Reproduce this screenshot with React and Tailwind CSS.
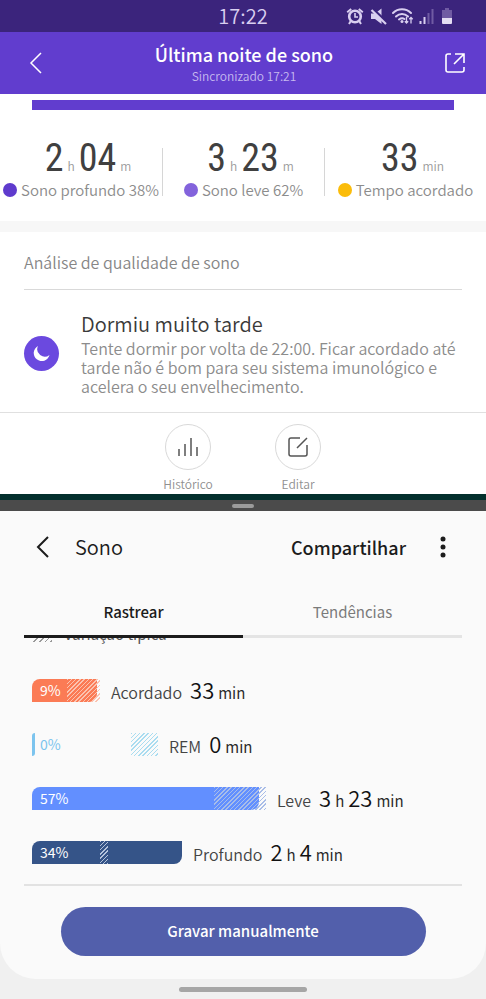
const STATS = [
  { parts: [['2', 'h'], ['04', 'm']], label: 'Sono profundo 38%', dot: 'bg-[#5f3bcd]' },
  { parts: [['3', 'h'], ['23', 'm']], label: 'Sono leve 62%', dot: 'bg-[#8363dc]' },
  { parts: [['33', 'min']], label: 'Tempo acordado', dot: 'bg-[#fbbc0a]' },
];

// fill, from and to are percentages of the row's width
const STAGES = [
  {
    name: 'Acordado',
    pct: 9,
    time: [['33', 'min']],
    fill: 15.1,
    from: 8.1,
    to: 15.8,
    bar: 'bg-[#fb7b55] rounded-tl-lg rounded-br-lg',
    text: 'text-white',
    hatch: 'bg-[repeating-linear-gradient(135deg,#fbc3b0_0px,#fbc3b0_1px,transparent_1px,transparent_3px)]',
  },
  {
    name: 'REM',
    pct: 0,
    time: [['0', 'min']],
    fill: 0.7,
    from: 23,
    to: 29.3,
    bar: 'bg-[#7cc4ee] rounded-tl-sm rounded-br-sm',
    text: 'text-[#7cc4ee]',
    hatch: 'bg-[repeating-linear-gradient(135deg,#a9dcf0_0px,#a9dcf0_1px,transparent_1px,transparent_3px)]',
  },
  {
    name: 'Leve',
    pct: 57,
    time: [['3', 'h'], ['23', 'min']],
    fill: 52.8,
    from: 42.3,
    to: 54.4,
    bar: 'bg-[#628fff] rounded-tl-lg rounded-br-lg',
    text: 'text-white',
    hatch: 'bg-[repeating-linear-gradient(135deg,#a9bde8_0px,#a9bde8_1px,transparent_1px,transparent_3px)]',
  },
  {
    name: 'Profundo',
    pct: 34,
    time: [['2', 'h'], ['4', 'min']],
    fill: 34.9,
    from: 15.8,
    to: 17.7,
    bar: 'bg-[#355488] rounded-tl-lg rounded-br-lg',
    text: 'text-white',
    hatch: 'bg-[repeating-linear-gradient(135deg,#b4c3dc_0px,#b4c3dc_1px,transparent_1px,transparent_3px)]',
  },
];

function StatusIcons() {
  return (
    <svg width="108" height="20" viewBox="0 0 108 20" fill="none" aria-hidden="true">
      <g stroke="#d9cff0" strokeWidth="2.6">
        <circle cx="9" cy="10.5" r="5.8" />
        <path d="M9 7V11H12" strokeWidth="1.6" />
        <path d="M1.2 6.2L5.2 3M16.8 6.200L12.8 3M4.8 15L3 18M13.2 15L15 18" strokeWidth="2" />
      </g>
      <path d="M25 7.500H29L35.500 2.500V18L29 13H25Z" fill="#d9cff0" />
      <path d="M26.500 2.500L41 16.500" stroke="#3b247c" strokeWidth="2.500" />
      <path d="M25.500 4L40 18" stroke="#d9cff0" strokeWidth="2.200" />
      <g stroke="#d9cff0" strokeWidth="2" strokeLinecap="round">
        <path d="M47 7C52 2 60 2 65 7" />
        <path d="M50 10.500C53.500 7 58.500 7 62 10.500" />
        <path d="M53 13.500C55 12 57 12 58.500 13" />
      </g>
      <circle cx="56" cy="15.500" r="1.500" fill="#d9cff0" />
      <path
        d="M60.500 11V17M58.800 15.300L60.500 17L62.200 15.300M65 17.500V11.500M63.300 13.200L65 11.500L66.700 13.200"
        stroke="#d9cff0"
        strokeWidth="1.300"
      />
      <path d="M74.500 18V15M78.500 18V11" stroke="#d9cff0" strokeWidth="2" />
      <path d="M82.500 18V7M86.500 18V3" stroke="#705ba3" strokeWidth="2" />
      <path d="M96 4H99V2H103V4H106V12H96Z" fill="#705ba3" />
      <path d="M96 12H106V17Q106 18 105 18H97Q96 18 96 17Z" fill="#e4ddf3" />
    </svg>
  );
}

function StatusBar() {
  return (
    <div className="grid h-8 grid-cols-3 items-center bg-[#3b247c] px-8 text-[#d9cff0]">
      <span />
      <span className="text-center text-xl font-[350]">17:22</span>
      <span className="flex justify-end">
        <StatusIcons />
      </span>
    </div>
  );
}

function LastNightHeader() {
  return (
    <header className="flex h-[62px] items-center bg-[#613dce] pr-[21px] pl-[29px] text-white">
      <button type="button" aria-label="Voltar">
        <svg width="14" height="22" viewBox="0 0 14 22" fill="none" stroke="currentColor" strokeWidth="1.500">
          <path d="M12 1L2 11L12 21" />
        </svg>
      </button>
      <div className="flex-1 pt-0.5 text-center">
        <h1 className="text-lg leading-6 font-medium">Última noite de sono</h1>
        <p className="text-xs leading-5 font-[350] text-[#c6b9ef]">Sincronizado 17:21</p>
      </div>
      <button type="button" aria-label="Abrir">
        <svg width="20" height="20" viewBox="0 0 20 20" fill="none" stroke="currentColor" strokeWidth="1.600">
          <path d="M6 1H3Q1 1 1 3V17Q1 19 3 19H17Q19 19 19 17V14" />
          <path d="M10 1H19V10M19 1L9 11" />
        </svg>
      </button>
    </header>
  );
}

function Stat({ stat }) {
  return (
    <div className="flex flex-1 flex-col items-center">
      <div className="flex h-10 items-baseline gap-1 pl-3.5 text-xs font-[350] text-[#999]">
        {stat.parts.map(([value, unit]) => (
          <span key={unit} className="flex items-baseline gap-1">
            <span className="font-['Roboto_Condensed','Roboto',sans-serif] text-[38px] leading-10 font-normal text-[#404040]">
              {value}
            </span>
            {unit}
          </span>
        ))}
      </div>
      <div className="flex items-center gap-1 text-[15px] leading-6 font-[350] whitespace-nowrap text-[#8c8c8c]">
        <span className={`size-3.5 rounded-full ${stat.dot}`} />
        {stat.label}
      </div>
    </div>
  );
}

function RoundAction({ label, children }) {
  return (
    <button type="button" className="flex w-[110px] flex-col items-center text-[#555]">
      <span className="flex size-[46px] items-center justify-center rounded-full border border-[#d9d9d9]">
        {children}
      </span>
      <span className="mt-1 text-xs leading-5 font-[350] text-[#909090]">{label}</span>
    </button>
  );
}

function LastNight() {
  return (
    <section className="bg-white">
      <StatusBar />
      <LastNightHeader />
      <div className="mx-8 mt-1.5 h-2.5 bg-[#613dce]" />
      <div className="grid grid-cols-3 pt-7 pb-[19px]">
        {STATS.map((stat, i) => (
          <div key={stat.label} className="flex">
            {i > 0 && <span className="mb-1.5 h-12 w-px self-end bg-[#d6d6d6]" />}
            <Stat stat={stat} />
          </div>
        ))}
      </div>
      <div className="h-[11px] bg-[#f7f7f7]" />
      <div className="mx-6">
        <h2 className="border-b border-[#d9d9d9] pt-[18px] pb-[15px] text-base leading-6 font-[350] text-[#868686]">
          Análise de qualidade de sono
        </h2>
        <div className="flex items-center gap-[22px] pt-5 pb-4">
          <span className="flex size-[35px] shrink-0 items-center justify-center rounded-full bg-[#6b49df]">
            <svg width="17" height="17" viewBox="0 0 17 17" fill="#fff" aria-hidden="true">
              <path d="M5 1A8 8 0 1 0 16.500 10A7.500 7.500 0 0 1 5 1Z" />
            </svg>
          </span>
          <div>
            <h3 className="mb-px text-xl leading-7 font-[350] text-[#3a3a3a]">Dormiu muito tarde</h3>
            <p className="text-base leading-[19px] font-[350] text-[#8c8c8c]">
              Tente dormir por volta de 22:00. Ficar acordado até tarde não é bom para seu sistema imunológico e
              acelera o seu envelhecimento.
            </p>
          </div>
        </div>
      </div>
      <div className="flex justify-center border-t border-[#e0e0e0] pt-[11px]">
        <RoundAction label="Histórico">
          <svg width="20" height="20" viewBox="0 0 20 20" stroke="currentColor" strokeWidth="1.500">
            <path d="M1 19V12M7 19V7M13 19V1M19 19V10" />
          </svg>
        </RoundAction>
        <RoundAction label="Editar">
          <svg width="20" height="20" viewBox="0 0 20 20" fill="none" stroke="currentColor" strokeWidth="1.500">
            <path d="M12 1H3Q1 1 1 3V17Q1 19 3 19H17Q19 19 19 17V8M19 1L9 11" />
          </svg>
        </RoundAction>
      </div>
    </section>
  );
}

function StageRow({ stage }) {
  const end = Math.max(stage.fill, stage.to);
  return (
    <li className="flex h-[23px] items-center">
      <div className="relative h-full shrink-0" style={{ width: `${end}%` }}>
        <div className={`h-full ${stage.bar}`} style={{ width: `${(stage.fill / end) * 100}%` }} />
        <div
          className={`absolute inset-y-0 ${stage.hatch}`}
          style={{ left: `${(stage.from / end) * 100}%`, width: `${((stage.to - stage.from) / end) * 100}%` }}
        />
        <span className={`absolute inset-y-0 left-2 text-sm leading-[23px] ${stage.text}`}>{stage.pct}%</span>
      </div>
      <div className="ml-[11px] flex items-baseline gap-2 whitespace-nowrap">
        <span className="text-base font-[350] text-[#444]">{stage.name}</span>
        <span className="flex items-baseline gap-1 text-[15px] text-[#2a2a2a]">
          {stage.time.map(([value, unit]) => (
            <span key={unit} className="flex items-baseline gap-1">
              <span className="text-[22px] leading-6 font-[350] text-[#111]">{value}</span>
              {unit}
            </span>
          ))}
        </span>
      </div>
    </li>
  );
}

function SleepPanel() {
  return (
    <section className="rounded-b-[36px] bg-[#fafafa] px-6 pb-[23px]">
      <header className="flex h-[71px] items-center text-[#1c1c1c]">
        <button type="button" aria-label="Voltar" className="flex w-[51px] pl-3">
          <svg width="13" height="22" viewBox="0 0 13 22" fill="none" stroke="currentColor" strokeWidth="2">
            <path d="M12 1L2 11L12 21" />
          </svg>
        </button>
        <h2 className="flex-1 text-xl font-[350]">Sono</h2>
        <button type="button" className="text-lg font-medium">
          Compartilhar
        </button>
        <button type="button" aria-label="Mais opções" className="ml-7 flex w-7 pl-1.5">
          <svg width="6" height="22" viewBox="0 0 6 22" fill="currentColor">
            <circle cx="3" cy="3" r="2.500" />
            <circle cx="3" cy="11" r="2.500" />
            <circle cx="3" cy="19" r="2.500" />
          </svg>
        </button>
      </header>
      <div role="tablist" className="grid grid-cols-2">
        <button
          type="button"
          role="tab"
          aria-selected="true"
          className="h-14 border-b-[3px] border-[#1c1c1c] pt-2 text-[15px] font-medium text-[#1c1c1c]"
        >
          Rastrear
        </button>
        <button
          type="button"
          role="tab"
          aria-selected="false"
          className="h-14 border-b-[3px] border-[#e4e4e4] pt-2 text-[15px] text-[#7a7a7a]"
        >
          Tendências
        </button>
      </div>
      <div className="overflow-hidden border-b-2 border-[#e2e2e2] pb-5 pl-2">
        <div className="-mt-4 flex h-6 items-center gap-3 text-[15px] text-[#555]">
          <span className="h-4 w-5 bg-[repeating-linear-gradient(135deg,#999_0px,#999_1px,transparent_1px,transparent_4px)]" />
          Variação típica
        </div>
        <ul className="mt-[33px] flex flex-col gap-[31px]">
          {STAGES.map((stage) => (
            <StageRow key={stage.name} stage={stage} />
          ))}
        </ul>
      </div>
      <button
        type="button"
        className="mx-auto mt-[21px] block h-[49px] w-5/6 rounded-full bg-[#525fab] text-[15px] font-medium text-white"
      >
        Gravar manualmente
      </button>
    </section>
  );
}

export default function App() {
  return (
    <main className="min-h-screen bg-[#f0f0f0] font-['Noto_Sans_CJK_SC','Noto_Sans',sans-serif]">
      <LastNight />
      <div className="h-1.5 bg-[#04302d]" />
      <div className="flex h-[11px] items-center justify-center bg-[#4b4b4b]">
        <span className="h-1 w-[22px] rounded-sm bg-[#9b9b9b]" />
      </div>
      <SleepPanel />
      <div className="flex h-5 items-center justify-center">
        <span className="h-[5px] w-32 rounded-full bg-[#a6a6a6]" />
      </div>
    </main>
  );
}
